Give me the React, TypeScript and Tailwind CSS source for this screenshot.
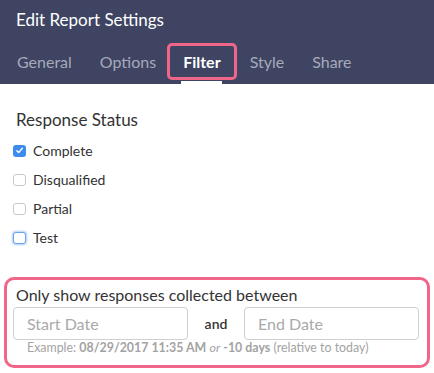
const TABS = ['General', 'Options', 'Filter', 'Style', 'Share'];

const STATUSES = [
  { label: 'Complete', checked: true, focused: false },
  { label: 'Disqualified', checked: false, focused: false },
  { label: 'Partial', checked: false, focused: false },
  { label: 'Test', checked: false, focused: true },
];

function Box({ checked, focused }: { checked: boolean; focused: boolean }) {
  if (checked) {
    return (
      <span className="flex h-[12px] w-[13px] items-center justify-center rounded-[3px] bg-[#3c8cf0]">
        <svg width="9" height="9" viewBox="0 0 9 9" fill="none">
          <path d="M1.8 4.8 L3.7 6.6 L7.3 2.2" stroke="white" strokeWidth="1.4" strokeLinecap="round" strokeLinejoin="round" />
        </svg>
      </span>
    );
  }
  return (
    <span
      className={`h-[12px] w-[13px] rounded-[3px] border bg-white ${
        focused ? 'border-[#6aa4ec] shadow-[0_0_2px_1px_rgba(110,165,235,0.55)]' : 'border-[#c9c9c9]'
      }`}
    />
  );
}

export default function App() {
  return (
    <div className="h-[373px] w-[434px] bg-white font-['Lato','Noto_Sans',sans-serif]">
      <div className="h-[84px] bg-[#3e4462] pt-[8px]">
        <div className="pl-[16px] text-[17px] leading-[24px] text-white">Edit Report Settings</div>
        <div className="mt-[11px] flex pl-[3px]">
          {TABS.map((t) => {
            const active = t === 'Filter';
            return (
              <div key={t} className={`flex flex-col items-center ${active ? '-ml-[3px] -mr-[1px]' : ''}`}>
                <div
                  className={`h-[37px] rounded-[5px] border-[3px] text-[16px] leading-[31px] ${
                    active
                      ? 'border-[#ef6688] px-[13px] font-bold text-white'
                      : 'border-transparent px-[11px] text-[#a6aabb]'
                  }`}
                >
                  {t}
                </div>
                {active && <div className="mt-[1px] h-[3px] w-[41px] bg-white" />}
              </div>
            );
          })}
        </div>
      </div>

      <div className="pt-[24px]">
        <div className="pl-[16px] text-[17px] leading-[24px] text-[#333]">Response Status</div>
        <div className="mt-[4px] pl-[13px]">
          {STATUSES.map((s) => (
            <div key={s.label} className="flex h-[29px] items-center gap-[7px] text-[14px] text-[#333]">
              <Box checked={s.checked} focused={s.focused} />
              <span>{s.label}</span>
            </div>
          ))}
        </div>

        <div className="mx-[4px] mt-[25px] rounded-[10px] border-[3px] border-[#ef6688] px-[6px] pb-[9px] pt-[5px]">
          <div className="pl-[3px] text-[16px] leading-[20px] text-[#333]">Only show responses collected between</div>
          <div className="mt-[2px] flex items-center">
            <div className="flex h-[33px] w-[175px] items-center rounded-[4px] border border-[#cfcfcf] pl-[13px] text-[16px] text-[#a9a9a9]">
              Start Date
            </div>
            <div className="flex-1 text-center text-[14px] font-semibold text-[#333]">and</div>
            <div className="mr-[2px] flex h-[33px] w-[175px] items-center rounded-[4px] border border-[#cfcfcf] pl-[13px] text-[16px] text-[#a9a9a9]">
              End Date
            </div>
          </div>
          <div className="pl-[14px] text-[12.4px] leading-[16px] text-[#a3a3a3]">
            Example: <b>08/29/2017 11:35 AM</b> <i>or</i> <b>-10 days</b> (relative to today)
          </div>
        </div>
      </div>
    </div>
  );
}
